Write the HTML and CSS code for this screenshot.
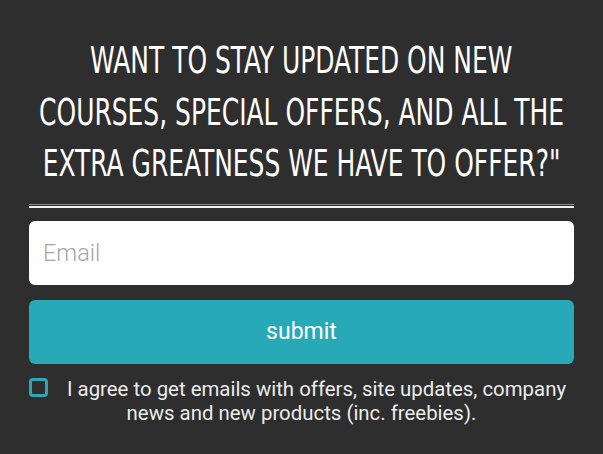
FILE: index.html
```html
<!DOCTYPE html>
<html>
<head>
<meta charset="utf-8">
<link rel="stylesheet" href="styles.css">
</head>
<body>
<div class="signup">
  <h1 class="title">
    <span class="line">WANT TO STAY UPDATED ON NEW</span>
    <span class="line">COURSES, SPECIAL OFFERS, AND ALL THE</span>
    <span class="line">EXTRA GREATNESS WE HAVE TO OFFER?"</span>
  </h1>
  <div class="divider"></div>
  <form class="form">
    <input class="email" type="text" placeholder="Email">
    <button class="submit" type="button">submit</button>
    <label class="consent">
      <span class="box"></span>I agree to get emails with offers, site updates, company news and new products (inc. freebies).
    </label>
  </form>
</div>
</body>
</html>
```
FILE: styles.css
```css
html, body {
  margin: 0;
  padding: 0;
  background: #2e2e2e;
}
.signup {
  padding: 35px 29px 0 29px;
  font-family: Roboto, "Liberation Sans", sans-serif;
}
.title {
  margin: 0;
  display: flex;
  flex-direction: column;
  align-items: center;
  font-family: "DejaVu Sans Condensed", "DejaVu Sans", sans-serif;
  font-weight: normal;
  font-size: 38px;
  line-height: 51.5px;
  color: #fff;
  text-align: center;
}
.line {
  display: block;
  white-space: nowrap;
  transform: scaleX(0.73);
  transform-origin: 50% 50%;
}
.divider {
  margin-top: 14px;
  height: 1px;
  border-top: 1px solid #8a8a8a;
  border-bottom: 2px solid #f2f2f2;
}
.form {
  margin: 13px 0 0 0;
  display: flex;
  flex-direction: column;
  gap: 15px;
}
.email {
  box-sizing: border-box;
  height: 64px;
  border: none;
  border-radius: 6px;
  background: #fff;
  padding: 0 14px;
  font-family: Roboto, sans-serif;
  font-size: 23.5px;
  font-weight: 300;
  outline: none;
}
.email::placeholder {
  color: #a6a6a6;
}
.submit {
  height: 64px;
  border: none;
  border-radius: 6px;
  background: #27a9b7;
  color: #fff;
  font-family: Roboto, sans-serif;
  font-size: 23px;
  padding: 0;
}
.consent {
  display: block;
  text-align: center;
  color: #ececec;
  font-size: 20.4px;
  line-height: 24px;
  margin-top: -2px;
}
.box {
  float: left;
  box-sizing: border-box;
  width: 19px;
  height: 19px;
  border: 3px solid #2fa6b3;
  border-radius: 4px;
  margin: 1px 11px 0 0;
}
```
